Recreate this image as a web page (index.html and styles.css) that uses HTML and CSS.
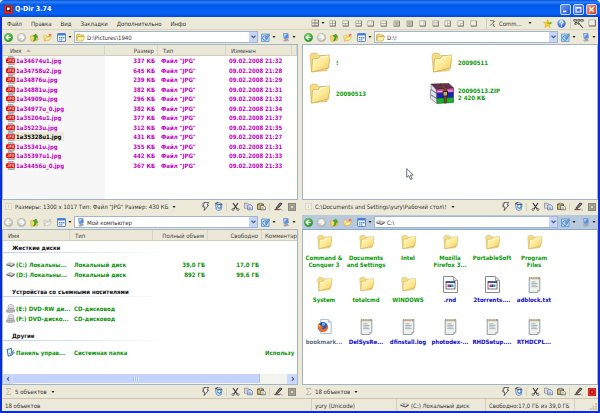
FILE: index.html
```html
<!DOCTYPE html>
<html lang="ru">
<head>
<meta charset="utf-8">
<title>Q-Dir 3.74</title>
<link rel="stylesheet" href="styles.css">
</head>
<body>
<svg class="sprite" aria-hidden="true">
  <defs>
    <linearGradient id="gFold" x1="0" y1="0" x2="1" y2="1"><stop offset="0" stop-color="#fffbd0"/><stop offset=".5" stop-color="#fdea98"/><stop offset="1" stop-color="#eec95e"/></linearGradient>
    <radialGradient id="gGreen" cx=".4" cy=".3" r=".8"><stop offset="0" stop-color="#7fdc6c"/><stop offset="1" stop-color="#128a18"/></radialGradient>
    <radialGradient id="gGrey" cx=".4" cy=".3" r=".8"><stop offset="0" stop-color="#f2f1ec"/><stop offset="1" stop-color="#b4b3ab"/></radialGradient>
    <radialGradient id="gBlue" cx=".4" cy=".3" r=".8"><stop offset="0" stop-color="#9cc4ff"/><stop offset="1" stop-color="#1c50c8"/></radialGradient>
  </defs>
  <symbol id="back" viewBox="0 0 18 18"><circle cx="9" cy="9" r="8.4" fill="url(#gGreen)" stroke="#2b8a2b" stroke-width=".8"/><path d="M14 9H5M9 4.5 4.500 9 9 13.500" fill="none" stroke="#fff" stroke-width="2.400"/></symbol>
  <symbol id="backoff" viewBox="0 0 18 18"><circle cx="9" cy="9" r="8.2" fill="url(#gGrey)" stroke="#a3a29a"/><path d="M14 9H5M9 4.500 4.500 9 9 13.500" fill="none" stroke="#fff" stroke-width="2.400"/></symbol>
  <symbol id="fwd" viewBox="0 0 18 18"><circle cx="9" cy="9" r="8.2" fill="url(#gGrey)" stroke="#a3a29a"/><path d="M4 9h9M9 4.500 13.500 9 9 13.500" fill="none" stroke="#fff" stroke-width="2.400"/></symbol>
  <symbol id="up" viewBox="0 0 18 18"><path d="M1 6 7 4l2 2 6-1 1 9-9 3-5-1z" fill="#f6d766" stroke="#c9a040"/><path d="M7 16c5-1 6-4 5-8l3 1-3-7-6 4 3 1c1 3 0 5-2 9z" fill="#37b22d" stroke="#1b7a1b" stroke-width=".8"/></symbol>
  <symbol id="newf" viewBox="0 0 18 18"><path d="M1 6 3 4l4 1 1 2 6-1v7L3 16z" fill="#fbe48a" stroke="#d6a545"/><path d="M3 16 6 9l11-2-4 7z" fill="#fff0a8" stroke="#d6a545"/><path d="m14 0 1 2.500 3-.5-2 2.200 1.500 2.500-3-1L12 7.500l.3-3L10 3l3-.5z" fill="#ff7040"/></symbol>
  <symbol id="newfoff" viewBox="0 0 18 18"><path d="M1 6 3 4l4 1 1 2 6-1v7L3 16z" fill="#e6e4da" stroke="#b5b4aa"/><path d="M3 16 6 9l11-2-4 7z" fill="#f4f3ee" stroke="#b5b4aa"/><path d="m14 1 1 2 2 .5-2 2-2 0-2-2z" fill="#c4c3ba"/></symbol>
  <symbol id="views" viewBox="0 0 18 18"><rect x="1" y="1" width="16" height="16" rx="1.500" fill="#fff" stroke="#3565b5" stroke-width="1.500"/><path d="M1 1h16v4H1z" fill="#3f7ce0"/><path d="M4 8h3v3H4zM8 8h3v3H8zM12 8h3v3h-3zM4 12.500h3v2.500H4zM8 12.500h3v2.500H8z" fill="#4a86dc"/></symbol>
  <symbol id="fold" viewBox="0 0 42 42"><path d="M2 9C2 5 4 2 8 2l8 1 3 4 17 1 2 3-2 26L5 40z" fill="#f3dc84" stroke="#d0b05c" stroke-width="1.200"/><path d="M5 40 7 14l12-1 3-5 18-2c2 0 2 1 2 3l-3 23z" fill="url(#gFold)" stroke="#c39c44" stroke-width="1.200"/><path d="M9 16l11-1 3-5 16-2" fill="none" stroke="#fffce4" stroke-width="1.500"/></symbol>
  <symbol id="sfold" viewBox="0 0 18 16"><path d="M1 13V3l2-2h4l2 2h6v3" fill="#f6d968" stroke="#a8842c"/><path d="M1 15 4 6h13l-3 9z" fill="#fff1a5" stroke="#a8842c"/></symbol>
  <symbol id="pc" viewBox="0 0 18 18"><path d="M5 1h9l1 9-9 1z" fill="#4b8df0" stroke="#8c98ae" stroke-width="1.500"/><path d="M6 2h6l-5 7z" fill="#a8d0ff"/><path d="M8 11h4l1 3H8zM5 14l9-1 2 2-9 2z" fill="#b6bdca" stroke="#747e90" stroke-width=".6"/></symbol>
  <symbol id="refresh" viewBox="0 0 18 18"><path d="M1 2h12l3 3v12H1z" fill="#bfe0fb" stroke="#3c7ac4" stroke-width="1.300"/><circle cx="8" cy="10" r="4.500" fill="#eef8ff" stroke="#2b6fc4" stroke-width="1.800"/><path d="m7 10 9-9 1 4-7 7z" fill="#72a6de" stroke="#30578c" stroke-width=".8"/></symbol>
  <symbol id="drop" viewBox="0 0 6 4"><path d="M0 0h6L3 4z" fill="#222"/></symbol>
  <symbol id="chev" viewBox="0 0 10 8"><path d="m1 1.500 4 4 4-4" fill="none" stroke="#4d6185" stroke-width="2.400"/></symbol>
  <symbol id="disk" viewBox="0 0 26 14"><path d="m1 6 9-5 15 4-9 6z" fill="#d4d4d4" stroke="#777"/><path d="M1 6v3l15 5v-3zM16 11v3l9-5V5z" fill="#555"/><circle cx="11" cy="5.500" r="2" fill="#888"/></symbol>
  <symbol id="cd" viewBox="0 0 24 24"><circle cx="13" cy="9" r="8" fill="#dfe1ee" stroke="#8d8fa0" stroke-width="1.300"/><circle cx="13" cy="9" r="2.500" fill="#fff" stroke="#999"/><path d="m1 17 5-5h13l4 4v5l-14 2-8-2z" fill="#c4c4c8" stroke="#666"/><path d="M3 18h17" stroke="#666"/></symbol>
  <symbol id="panel" viewBox="0 0 24 24"><path d="M3 4 14 1l3 17-11 4z" fill="#e5f3ff" stroke="#235ea8" stroke-width="2.500"/><path d="m9 14 3 3 9-11" fill="none" stroke="#3a72b8" stroke-width="2.500"/><path d="M17 10h6v5h-6z" fill="#6e93bf"/></symbol>
  <symbol id="jpg" viewBox="0 0 27 27"><path d="M7 1h13l5 5v20H7z" fill="#bdbdbd" stroke="#858585" stroke-width="1.500"/><path d="M20 1v5h5" fill="#eee" stroke="#777"/><rect x="0" y="7" width="27" height="14" rx="3" fill="#e8150f"/><path d="M8 10v6q-2 3-4 0M12 18v-8h3q2 2 0 4h-3M24 11q-5-2-5 3t4 3v-3h-2" fill="none" stroke="#fff" stroke-width="1.600"/></symbol>
  <symbol id="rar" viewBox="0 0 48 42"><path d="M2 2 38 1l9 9-35 3z" fill="#66304f" stroke="#221"/><path d="m12 13 35-3v9l-34 2z" fill="#d64fc0" stroke="#411"/><path d="m13 21 34-2v10l-34 2z" fill="#1428c8" stroke="#114"/><path d="m13 31 34-2v10l-33 2z" fill="#14b428" stroke="#141"/><path d="m2 2 10 11 1 8-11-9zM1 13l12 8v10L1 22zM1 24l12 7 1 10L1 31z" fill="#e4e4ee" stroke="#445"/><path d="m25 2 8 9v29h-5V12l-8-10z" fill="#7c4a2e" stroke="#321"/><rect x="26" y="17" width="9" height="9" fill="#c8aa72" stroke="#321" stroke-width="2"/><path d="M15 17h10M36 16h9" stroke="#f7b8ee" stroke-width="2"/></symbol>
  <symbol id="app16" viewBox="0 0 30 34"><path d="M1 1h20l8 8v24H1z" fill="#fff" stroke="#8a8a8a" stroke-width="2"/><path d="M21 1v8h8" fill="#ddd" stroke="#8a8a8a" stroke-width="1.500"/><rect x="6" y="11" width="18" height="15" fill="#fff" stroke="#444" stroke-width="1.500"/><path d="M6 11h18v3H6z" fill="#2d50b4"/><path d="M9 17h4v5H9z" fill="#e22"/><path d="M13 17h4v5h-4z" fill="#22c"/><path d="M17 17h4v5h-4z" fill="#2a8"/></symbol>
  <symbol id="txt" viewBox="0 0 24 32"><path d="M2 3h20v24l-4 4H2z" fill="#eef1ee" stroke="#8d9aa2" stroke-width="1.800"/><path d="M2 2h20v4H2z" fill="#b09a70"/><path d="M5 1v4M9 1v4M13 1v4M17 1v4" stroke="#fff" stroke-width="1.300"/><path d="M6 11h8M6 14h12M6 17h10M6 20h12" stroke="#9aa4ac" stroke-width="1.500"/><path d="M18 31v-4h4" fill="#ccc" stroke="#889"/></symbol>
  <symbol id="ffx" viewBox="0 0 36 36"><path d="M9 1h18l7 7v27H9z" fill="#fafcff" stroke="#7d93c0" stroke-width="1.500"/><path d="M27 1v7h7" fill="#cfdcf2" stroke="#7d93c0"/><circle cx="14" cy="19" r="12" fill="#2356b4"/><path d="M12 9q8-1 8 5-4 4-7 2" fill="#6fb2f0"/><path d="M3 11q-3 12 5 18 11 6 17-4 3-7-1-13 0 7-4 11-6 4-9-1l5-1-5-4q-6-1-8-6z" fill="#ee6a1a"/><path d="M3 12q4 1 7 6l-5 1z" fill="#ffb020"/></symbol>
  <symbol id="bolt" viewBox="0 0 18 20"><path d="M7 1h9l-4 6h4L6 19l2-8H3z" fill="#fff" stroke="#222" stroke-width="1.500"/><path d="M2 3 8 1M1 7h4" stroke="#222"/></symbol>
  <symbol id="recyc" viewBox="0 0 20 20"><path d="m3 3 9-2 6 4-2 12-7 2-4-3z" fill="#cfe2f6" stroke="#3e5c8c" stroke-width="1.300"/><circle cx="12" cy="10" r="5" fill="#3d84dc"/><path d="m8 10 3-4 4 3-3 4z" fill="#fff"/><path d="M3 3l6 3 9-1M4 3l5-2" fill="none" stroke="#333" stroke-width="1.600"/></symbol>
  <symbol id="cut" viewBox="0 0 18 18"><path d="M4 2 13 15M14 2 5 15" stroke="#333" stroke-width="2.200"/><circle cx="4" cy="15" r="2" fill="#fff" stroke="#333" stroke-width="1.300"/><circle cx="14" cy="15" r="2" fill="#fff" stroke="#333" stroke-width="1.300"/></symbol>
  <symbol id="copy" viewBox="0 0 22 18"><path d="M1 1h8l3 3v9H1z" fill="#fff" stroke="#333" stroke-width="1.200"/><path d="M9 5h8l4 4v8H9z" fill="#dce9ff" stroke="#24439a" stroke-width="1.300"/><path d="M3 5h5M3 8h5M11 11h7M11 14h7" stroke="#456"/></symbol>
  <symbol id="paste" viewBox="0 0 22 18"><path d="M1 3h15v13H1z" fill="#d6b963" stroke="#222" stroke-width="1.500"/><path d="M5 1h7v4H5z" fill="#eee" stroke="#222"/><path d="M9 7h8l4 4v6H9z" fill="#fff" stroke="#222" stroke-width="1.300"/><path d="M11 11h6M11 14h7" stroke="#555"/></symbol>
  <symbol id="edit" viewBox="0 0 20 20"><path d="M1 17h12" stroke="#222" stroke-width="1.800"/><path d="M4 14 13 2l5 2-9 10z" fill="#777" stroke="#222" stroke-width="1.500"/><path d="m4 14 5 0-5 3z" fill="#c33"/><path d="M13 16h3M17 18h2" stroke="#777" stroke-width="2"/></symbol>
  <symbol id="sq" viewBox="0 0 18 18"><path d="M0 0h18v18H0z" fill="#85827a"/><path d="M2 2h14v14H2z" fill="#b0ac9f"/><path d="M5 5h8v8H5z" fill="#dad6c8" stroke="#6a675e" stroke-width="1.500"/></symbol>
  <symbol id="sqred" viewBox="0 0 18 18"><path d="M0 0h18v18H0z" fill="#b81818"/><path d="M1 1h16v16H1z" fill="#f23030"/><path d="M5 5h8v8H5z" fill="#f44" stroke="#600" stroke-width="1.800"/></symbol>
  <symbol id="page" viewBox="0 0 18 18"><path d="M1 1h16v16H1z" fill="#f0eee2" stroke="#c9c6b6" stroke-width="1.500"/><path d="M9 5v8" stroke="#bbb8a8" stroke-width="1.500"/></symbol>
  <symbol id="sigma" viewBox="0 0 14 16"><path d="M12 4V1H2l6 7-6 7h10v-3" fill="none" stroke="#aaa799" stroke-width="1.600"/></symbol>
  <symbol id="frame" viewBox="0 0 18 18"><path d="M2 2h14v13H2z" fill="#f2f0e6" stroke="#a09d90" stroke-width="1.600"/><path d="M2 16h15V2" fill="none" stroke="#6b695f" stroke-width="2"/></symbol>
  <symbol id="logo" viewBox="0 0 26 26"><path d="M0 0h26v26H0z" fill="#b01414"/><path d="M2 2h22v22H2z" fill="#d83a30"/><path d="M7 6h11v11H7zM14 14l6 6" fill="#fff" stroke="#5c0808" stroke-width="3"/></symbol>
  <symbol id="tool" viewBox="0 0 18 20"><path d="M2 2h10v4l-4 4 6 4-4 2 6 3M12 6l4-3M1 16l6-4" fill="none" stroke="#44423c" stroke-width="1.800"/></symbol>
  <symbol id="star" viewBox="0 0 24 24"><path d="m12 1 3 8 8 0-6 5 2 9-7-5-7 5 2-9-6-5h8z" fill="#ffd21e" stroke="#c09a10"/><path d="M11 12h9v3l3-4-3-4v3h-9z" fill="#28a828"/></symbol>
  <symbol id="help" viewBox="0 0 24 24"><circle cx="12" cy="12" r="11" fill="url(#gBlue)"/><path d="M8 9q0-4 4-4t4 3.500q0 2-4 4.500v2M12 17v3" fill="none" stroke="#fff" stroke-width="3"/></symbol>
  <symbol id="lens" viewBox="0 0 28 28"><path d="M2 4h7v4H2zM12 4h6v4h-6zM20 4h6v4h-6z" fill="none" stroke="#333" stroke-width="1.800"/><path d="M5 12h6l4 5M14 11l3 5 8 9M3 15l6 1" fill="none" stroke="#222" stroke-width="2.400"/></symbol>
  <symbol id="cursor" viewBox="0 0 14 22"><path d="M1 1v16l4-3 3 7 3-1-3-7h5z" fill="#fff" stroke="#44506a" stroke-width="1.500"/></symbol>
</svg>

<div class="window">
  <header class="title">
    <svg class="logo"><use href="#logo"/></svg>
    <h1>Q-Dir 3.74</h1>
    <button class="wbtn" aria-label="Свернуть"><svg viewBox="0 0 22 22"><path d="M5 16h8" stroke="#fff" stroke-width="3.500"/></svg></button>
    <button class="wbtn" aria-label="Развернуть"><svg viewBox="0 0 22 22"><path d="M5 6h12v11H5zM5 7h12" fill="none" stroke="#fff" stroke-width="2.500"/></svg></button>
    <button class="wbtn close" aria-label="Закрыть"><svg viewBox="0 0 22 22"><path d="m5 5 12 12M17 5 5 17" stroke="#fff" stroke-width="3"/></svg></button>
  </header>

  <div class="menubar">
    <nav class="menu"><button>Файл</button><button>Правка</button><button>Вид</button><button>Закладки</button><button>Дополнительно</button><button>Инфо</button></nav>
    <div class="layouts">
      <button class="split" aria-label="Вид панелей"><svg viewBox="0 0 18 18"><use href="#frame"/><path d="M9 2v13M2 9h14" stroke="#57554d" stroke-width="1.500"/></svg><svg class="dn"><use href="#drop"/></svg></button>
      <div class="modes">
        <button aria-label="Панели 1"><svg viewBox="0 0 18 18"><use href="#frame"/><path d="M9 2v13M2 9h14" stroke="#57554d"/></svg></button>
        <button aria-label="Панели 2"><svg viewBox="0 0 18 18"><use href="#frame"/><path d="M9 9v6M2 9h14" stroke="#57554d"/></svg></button>
        <button aria-label="Панели 3"><svg viewBox="0 0 18 18"><use href="#frame"/><path d="M9 2v7M2 9h14" stroke="#57554d"/></svg></button>
        <button aria-label="Панели 4"><svg viewBox="0 0 18 18"><use href="#frame"/><path d="M11 2v13" stroke="#a09d90"/></svg></button>
        <button aria-label="Панели 5"><svg viewBox="0 0 18 18"><use href="#frame"/><path d="M2 9h14" stroke="#57554d"/></svg></button>
        <button aria-label="Панели 6"><svg viewBox="0 0 18 18"><use href="#frame"/><path d="M3 3h12v11H3z" fill="#b5b2a6"/></svg></button>
        <button aria-label="Панели 7"><svg viewBox="0 0 18 18"><use href="#frame"/><path d="M3 3h12v11H3z" fill="#b5b2a6"/></svg></button>
        <button aria-label="Панели 8"><svg viewBox="0 0 18 18"><use href="#frame"/><path d="M12 2v13" stroke="#a09d90"/></svg></button>
        <button aria-label="Панели 9"><svg viewBox="0 0 18 18"><use href="#frame"/><path d="M2 6h14M2 10h14" stroke="#8a877b"/></svg></button>
        <button aria-label="Панели 10"><svg viewBox="0 0 18 18"><use href="#frame"/><path d="M9 2v13M9 9h7" stroke="#8a877b"/></svg></button>
        <button aria-label="Панели 11"><svg viewBox="0 0 18 18"><use href="#frame"/><path d="M9 9v6M9 9h7" stroke="#8a877b"/></svg></button>
        <button aria-label="Панели 12"><svg viewBox="0 0 18 18"><use href="#frame"/></svg></button>
      </div>
      <button class="comm"><svg><use href="#tool"/></svg><span>Comm...</span><svg class="dn"><use href="#drop"/></svg></button>
      <button class="big star" aria-label="Избранное"><svg><use href="#star"/></svg></button>
      <button class="big" aria-label="Справка"><svg><use href="#help"/></svg></button>
      <button class="big lens" aria-label="Лупа"><svg><use href="#lens"/></svg></button>
      <button class="big last" aria-label="Окно"><svg><use href="#frame"/></svg></button>
    </div>
  </div>

  <main class="panes">
    <section class="pane">
      <div class="toolbar">
        <button aria-label="Назад"><svg><use href="#back"/></svg></button><button aria-label="Вперёд"><svg><use href="#fwd"/></svg></button><button aria-label="Вверх"><svg><use href="#up"/></svg></button><button aria-label="Новая папка"><svg><use href="#newf"/></svg></button>
        <button class="wide" aria-label="Вид"><svg><use href="#views"/></svg><svg class="dn"><use href="#drop"/></svg></button>
        <div class="address"><svg><use href="#sfold"/></svg><select aria-label="Адрес"><option>D:\Pictures\1940</option></select><span class="arrow"><svg><use href="#chev"/></svg></span></div>
        <button class="wide" aria-label="Обновить"><svg><use href="#refresh"/></svg><svg class="dn"><use href="#drop"/></svg></button>
        <button class="wide" aria-label="Компьютер"><svg><use href="#pc"/></svg><svg class="dn"><use href="#drop"/></svg></button>
      </div>
      <div class="content sorted">
        <table class="files">
          <colgroup><col class="f1"><col class="f2"><col class="f3"><col class="f4"><col></colgroup>
          <thead><tr><th>Имя <svg class="asc" viewBox="0 0 8 5"><path d="M0 5h8L4 0z" fill="#b5b2a2"/></svg></th><th class="num">Размер</th><th>Тип</th><th>Изменен</th><th></th></tr></thead>
          <tbody>
            <tr><td><svg><use href="#jpg"/></svg><span>1a34674u1.jpg</span></td><td class="num">337 КБ</td><td>Файл "JPG"</td><td colspan="2">09.02.2008 21:32</td></tr>
            <tr><td><svg><use href="#jpg"/></svg><span>1a34758u2.jpg</span></td><td class="num">645 КБ</td><td>Файл "JPG"</td><td colspan="2">09.02.2008 21:28</td></tr>
            <tr><td><svg><use href="#jpg"/></svg><span>1a34876u.jpg</span></td><td class="num">239 КБ</td><td>Файл "JPG"</td><td colspan="2">09.02.2008 21:29</td></tr>
            <tr><td><svg><use href="#jpg"/></svg><span>1a34881u.jpg</span></td><td class="num">382 КБ</td><td>Файл "JPG"</td><td colspan="2">09.02.2008 21:31</td></tr>
            <tr><td><svg><use href="#jpg"/></svg><span>1a34909u.jpg</span></td><td class="num">296 КБ</td><td>Файл "JPG"</td><td colspan="2">09.02.2008 21:32</td></tr>
            <tr><td><svg><use href="#jpg"/></svg><span>1a34977u_0.jpg</span></td><td class="num">382 КБ</td><td>Файл "JPG"</td><td colspan="2">09.02.2008 21:34</td></tr>
            <tr><td><svg><use href="#jpg"/></svg><span>1a35204u1.jpg</span></td><td class="num">377 КБ</td><td>Файл "JPG"</td><td colspan="2">09.02.2008 21:37</td></tr>
            <tr><td><svg><use href="#jpg"/></svg><span>1a35223u.jpg</span></td><td class="num">312 КБ</td><td>Файл "JPG"</td><td colspan="2">09.02.2008 21:35</td></tr>
            <tr><td><svg><use href="#jpg"/></svg><span class="picked">1a35328u1.jpg</span></td><td class="num">431 КБ</td><td>Файл "JPG"</td><td colspan="2">09.02.2008 21:27</td></tr>
            <tr><td><svg><use href="#jpg"/></svg><span>1a35341u.jpg</span></td><td class="num">355 КБ</td><td>Файл "JPG"</td><td colspan="2">09.02.2008 21:31</td></tr>
            <tr><td><svg><use href="#jpg"/></svg><span>1a35397u1.jpg</span></td><td class="num">442 КБ</td><td>Файл "JPG"</td><td colspan="2">09.02.2008 21:33</td></tr>
            <tr><td><svg><use href="#jpg"/></svg><span>1a34456u_0.jpg</span></td><td class="num">367 КБ</td><td>Файл "JPG"</td><td colspan="2">09.02.2008 21:33</td></tr>
          </tbody>
        </table>
      </div>
      <footer class="status">
        <svg class="mark"><use href="#page"/></svg><button class="info">Размеры: 1300 x 1017 Тип: Файл "JPG" Размер: 430 КБ <svg class="dn"><use href="#drop"/></svg></button>
        <button aria-label="Быстро"><svg><use href="#bolt"/></svg></button><button aria-label="Удалить"><svg><use href="#recyc"/></svg></button><i></i><button aria-label="Вырезать"><svg><use href="#cut"/></svg></button><button aria-label="Копировать"><svg><use href="#copy"/></svg></button><button aria-label="Вставить"><svg><use href="#paste"/></svg></button><i></i><button aria-label="Переименовать"><svg><use href="#edit"/></svg></button><button aria-label="Выбор панели"><svg class="sq"><use href="#sq"/></svg></button>
      </footer>
    </section>

    <section class="pane">
      <div class="toolbar">
        <button aria-label="Назад"><svg><use href="#back"/></svg></button><button aria-label="Вперёд"><svg><use href="#fwd"/></svg></button><button aria-label="Вверх"><svg><use href="#up"/></svg></button><button aria-label="Новая папка"><svg><use href="#newf"/></svg></button>
        <button class="wide" aria-label="Вид"><svg><use href="#views"/></svg><svg class="dn"><use href="#drop"/></svg></button>
        <div class="address"><svg><use href="#sfold"/></svg><select aria-label="Адрес"><option>D:\!</option></select><span class="arrow"><svg><use href="#chev"/></svg></span></div>
        <button class="wide" aria-label="Обновить"><svg><use href="#refresh"/></svg><svg class="dn"><use href="#drop"/></svg></button>
        <button class="wide" aria-label="Компьютер"><svg><use href="#pc"/></svg><svg class="dn"><use href="#drop"/></svg></button>
      </div>
      <div class="content">
        <ul class="tiles">
          <li><svg><use href="#fold"/></svg><span>!</span></li>
          <li><svg><use href="#fold"/></svg><span>20090511</span></li>
          <li><svg><use href="#fold"/></svg><span>20090513</span></li>
          <li><svg class="rar"><use href="#rar"/></svg><span>20090513.ZIP<br>2 420 КБ</span></li>
        </ul>
        <svg class="cursor"><use href="#cursor"/></svg>
      </div>
      <footer class="status">
        <svg class="mark"><use href="#page"/></svg><button class="info">C:\Documents and Settings\yury\Рабочий стол\! <svg class="dn"><use href="#drop"/></svg></button>
        <button aria-label="Быстро"><svg><use href="#bolt"/></svg></button><button aria-label="Удалить"><svg><use href="#recyc"/></svg></button><i></i><button aria-label="Вырезать"><svg><use href="#cut"/></svg></button><button aria-label="Копировать"><svg><use href="#copy"/></svg></button><button aria-label="Вставить"><svg><use href="#paste"/></svg></button><i></i><button aria-label="Переименовать"><svg><use href="#edit"/></svg></button><button aria-label="Выбор панели"><svg class="sq"><use href="#sq"/></svg></button>
      </footer>
    </section>

    <section class="pane">
      <div class="toolbar">
        <button aria-label="Назад"><svg><use href="#backoff"/></svg></button><button aria-label="Вперёд"><svg><use href="#fwd"/></svg></button><button aria-label="Вверх"><svg><use href="#up"/></svg></button><button aria-label="Новая папка"><svg><use href="#newfoff"/></svg></button>
        <button class="wide" aria-label="Вид"><svg><use href="#views"/></svg><svg class="dn"><use href="#drop"/></svg></button>
        <div class="address"><svg><use href="#pc"/></svg><select aria-label="Адрес"><option>Мой компьютер</option></select><span class="arrow"><svg><use href="#chev"/></svg></span></div>
        <button class="wide" aria-label="Обновить"><svg><use href="#refresh"/></svg><svg class="dn"><use href="#drop"/></svg></button>
        <button class="wide" aria-label="Компьютер"><svg><use href="#pc"/></svg><svg class="dn"><use href="#drop"/></svg></button>
      </div>
      <div class="content computer">
        <div class="drivebox">
        <table class="drives">
          <colgroup><col class="d1"><col class="d2"><col class="d3"><col class="d4"><col></colgroup>
          <thead><tr><th>Имя</th><th>Тип</th><th class="num">Полный объем</th><th class="num">Свободно</th><th class="note">Комментар</th></tr></thead>
          <tbody>
            <tr class="group first"><th colspan="5">Жесткие диски</th></tr>
            <tr><td><svg><use href="#disk"/></svg>(C:) Локальны...</td><td>Локальный диск</td><td class="num">39,0 ГБ</td><td class="num">17,0 ГБ</td><td></td></tr>
            <tr><td><svg><use href="#disk"/></svg>(D:) Локальны...</td><td>Локальный диск</td><td class="num">892 ГБ</td><td class="num">99,6 ГБ</td><td></td></tr>
            <tr class="group"><th colspan="5">Устройства со съемными носителями</th></tr>
            <tr><td><svg><use href="#cd"/></svg>(E:) DVD-RW ди...</td><td>CD-дисковод</td><td></td><td></td><td></td></tr>
            <tr><td><svg><use href="#cd"/></svg>(F:) DVD-диско...</td><td>CD-дисковод</td><td></td><td></td><td></td></tr>
            <tr class="group"><th colspan="5">Другие</th></tr>
            <tr><td><svg><use href="#panel"/></svg>Панель управ...</td><td>Системная папка</td><td></td><td></td><td class="note">Использу</td></tr>
          </tbody>
        </table>
        </div>
        <div class="scroll">
          <button aria-label="Влево"><svg viewBox="0 0 8 8"><path d="M5 1 2 4l3 3" fill="none" stroke="#4d6185" stroke-width="1.800"/></svg></button>
          <div class="track"><div class="thumb"></div></div>
          <button aria-label="Вправо"><svg viewBox="0 0 8 8"><path d="m3 1 3 3-3 3" fill="none" stroke="#4d6185" stroke-width="1.800"/></svg></button>
        </div>
      </div>
      <footer class="status">
        <svg class="mark"><use href="#sigma"/></svg><button class="info">5 объектов <svg class="dn"><use href="#drop"/></svg></button>
        <button aria-label="Быстро"><svg><use href="#bolt"/></svg></button><button aria-label="Удалить"><svg><use href="#recyc"/></svg></button><i></i><button aria-label="Вырезать"><svg><use href="#cut"/></svg></button><button aria-label="Копировать"><svg><use href="#copy"/></svg></button><button aria-label="Вставить"><svg><use href="#paste"/></svg></button><i></i><button aria-label="Переименовать"><svg><use href="#edit"/></svg></button><button aria-label="Выбор панели"><svg class="sq"><use href="#sq"/></svg></button>
      </footer>
    </section>

    <section class="pane active">
      <div class="toolbar">
        <button aria-label="Назад"><svg><use href="#back"/></svg></button><button aria-label="Вперёд"><svg><use href="#fwd"/></svg></button><button aria-label="Вверх"><svg><use href="#up"/></svg></button><button aria-label="Новая папка"><svg><use href="#newf"/></svg></button>
        <button class="wide" aria-label="Вид"><svg><use href="#views"/></svg><svg class="dn"><use href="#drop"/></svg></button>
        <div class="address"><svg><use href="#disk"/></svg><select aria-label="Адрес"><option>C:\</option></select><span class="arrow"><svg><use href="#chev"/></svg></span></div>
        <button class="wide" aria-label="Обновить"><svg><use href="#refresh"/></svg><svg class="dn"><use href="#drop"/></svg></button>
        <button class="wide" aria-label="Компьютер"><svg><use href="#pc"/></svg><svg class="dn"><use href="#drop"/></svg></button>
      </div>
      <div class="content">
        <ul class="icons">
          <li><svg><use href="#fold"/></svg>Command &amp; Conquer 3</li>
          <li><svg><use href="#fold"/></svg>Documents and Settings</li>
          <li><svg><use href="#fold"/></svg>Intel</li>
          <li><svg><use href="#fold"/></svg>Mozilla Firefox 3...</li>
          <li><svg><use href="#fold"/></svg>PortableSoft</li>
          <li><svg><use href="#fold"/></svg>Program<br>Files</li>
          <li><svg><use href="#fold"/></svg>System</li>
          <li><svg><use href="#fold"/></svg>totalcmd</li>
          <li><svg><use href="#fold"/></svg>WINDOWS</li>
          <li class="file"><svg><use href="#app16"/></svg>.rnd</li>
          <li class="file"><svg><use href="#app16"/></svg>2torrents....</li>
          <li class="file"><svg><use href="#txt"/></svg>adblock.txt</li>
          <li class="file dim"><svg><use href="#ffx"/></svg>bookmark...</li>
          <li class="file"><svg><use href="#txt"/></svg>DelSysRe...</li>
          <li class="file"><svg><use href="#txt"/></svg>dfinstall.log</li>
          <li class="file"><svg><use href="#txt"/></svg>photodex-...</li>
          <li class="file"><svg><use href="#txt"/></svg>RHDSetup....</li>
          <li class="file"><svg><use href="#txt"/></svg>RTHDCPL...</li>
        </ul>
      </div>
      <footer class="status">
        <svg class="mark"><use href="#sigma"/></svg><button class="info">18 объектов <svg class="dn"><use href="#drop"/></svg></button>
        <button aria-label="Быстро"><svg><use href="#bolt"/></svg></button><button aria-label="Удалить"><svg><use href="#recyc"/></svg></button><i></i><button aria-label="Вырезать"><svg><use href="#cut"/></svg></button><button aria-label="Копировать"><svg><use href="#copy"/></svg></button><button aria-label="Вставить"><svg><use href="#paste"/></svg></button><i></i><button aria-label="Переименовать"><svg><use href="#edit"/></svg></button><button aria-label="Выбор панели"><svg class="sq"><use href="#sqred"/></svg></button>
      </footer>
    </section>
  </main>

  <footer class="mainstatus">
    <span>18 объектов</span>
    <span>yury (Unicode)</span>
    <span><svg><use href="#disk"/></svg>(C:) Локальный диск</span>
    <span>Свободно:17,0 ГБ из 39,0 ГБ</span>
    <span class="grip"><svg viewBox="0 0 8 8"><path d="M6 0h2v2H6zM3 3h2v2H3zM6 3h2v2H6zM0 6h2v2H0zM3 6h2v2H3zM6 6h2v2H6z" fill="#bdb9a6"/></svg></span>
  </footer>
</div>
</body>
</html>
```
FILE: styles.css
```css
* { box-sizing: border-box; }

body {
  margin: 0;
  background: #dfe8f6;
  color: #333;
  font: 6px/9px "DejaVu Sans Condensed", "Noto Sans", sans-serif;
}

button, select {
  margin: 0;
  padding: 0;
  border: 0;
  background: none;
  color: inherit;
  font: inherit;
}

svg { display: block; flex: none; }
.sprite { position: absolute; width: 0; height: 0; }
svg.dn { width: 4px; height: 2px; }

.window {
  display: flex;
  flex-direction: column;
  min-height: 100vh;
  padding: 0 2px 2px;
  background: #0a2fd0;
  border-radius: 5px 5px 0 0;
  overflow: hidden;
}

/* Title bar */
.title {
  display: flex;
  align-items: center;
  gap: 2px;
  height: 17px;
  margin: 0 -2px;
  padding: 1px 3px 0 4px;
  background: linear-gradient(#0a4fd8, #2a83fb 2px, #0358e6 5px, #0462f8 13px, #0348cc);
}
.logo { width: 9px; height: 9px; }
.title h1 {
  flex: 1;
  margin: 0;
  color: #fff;
  font-size: 7px;
  font-weight: bold;
}
.wbtn {
  width: 11px;
  height: 11px;
  border: 1px solid #c4d6fb;
  border-radius: 2px;
  background: linear-gradient(135deg, #6d9bf8, #1f4fd8);
}
.wbtn svg { width: 9px; height: 9px; }
.wbtn.close { background: linear-gradient(135deg, #f09a7c, #d03c10); }

/* Menu */
.menubar {
  display: grid;
  grid-template-columns: 1fr 1fr;
  height: 13px;
  background: #ece9d8;
  border-bottom: 1px solid #d9d5c3;
}
.menu { display: flex; gap: 9px; padding-left: 5px; }
.layouts { display: flex; align-items: center; padding-left: 10px; }
.layouts svg { width: 7px; height: 7px; }
.layouts svg.dn { width: 4px; height: 2px; }
.layouts button { display: flex; align-items: center; justify-content: center; }
.layouts .split { width: 16px; gap: 2px; }
.layouts .split svg:first-child { width: 8px; height: 8px; }
.modes {
  flex: 1;
  display: grid;
  grid-template-columns: repeat(12, 1fr);
}
.layouts .comm {
  width: 46px;
  height: 11px;
  gap: 3px;
  padding-left: 2px;
  margin-left: 6px;
  justify-content: flex-start;
  border-left: 1px solid #d3cfbd;
}
.comm span { flex: 1; text-align: left; }
.big { width: 14px; height: 12px; }
.big svg { width: 9px; height: 9px; }
.big.star { margin-left: 8px; }
.big.lens { width: 16px; margin-left: 2px; border-left: 1px solid #d3cfbd; }
.big.lens svg { width: 11px; height: 11px; }
.big.last { width: 12px; }
.big.last svg { width: 8px; height: 8px; }

/* Panes */
.panes {
  flex: 1;
  display: grid;
  grid-template-columns: minmax(0, 1fr) minmax(0, 1fr);
  grid-auto-rows: 1fr;
  gap: 2px 4px;
  background: #ece9d8;
}
.pane { display: flex; flex-direction: column; min-width: 0; }

.toolbar {
  display: flex;
  align-items: center;
  height: 14px;
  background: #ece9d8;
}
.active .toolbar { background: #b7c9da; }
.toolbar button {
  display: flex;
  align-items: center;
  justify-content: center;
  width: 13px;
  height: 12px;
}
.toolbar svg { width: 9px; height: 9px; }
.toolbar svg.dn { width: 4px; height: 2px; }
.toolbar .wide { width: 20px; gap: 2px; }

.address {
  flex: 1;
  display: flex;
  align-items: center;
  gap: 2px;
  min-width: 0;
  height: 12px;
  padding-left: 1px;
  background: #fff;
  border: 1px solid #a3b6c9;
}
.address select {
  flex: 1;
  min-width: 0;
  height: 10px;
  appearance: none;
  outline: 0;
}
.address .arrow {
  display: flex;
  align-items: center;
  justify-content: center;
  width: 8px;
  height: 10px;
  background: #c5d5fb;
  pointer-events: none;
}
.address .arrow svg { width: 5px; height: 4px; }

.content {
  flex: 1;
  position: relative;
  background: #fff;
  border: 1px solid #9fb4c8;
  overflow: hidden;
}
.active .content { border-top-color: #86a9d2; }
.sorted { background: linear-gradient(to right, #f7f7f7 102px, #fff 102px); }

/* Tables */
table {
  border-collapse: separate;
  border-spacing: 0;
  table-layout: fixed;
}
td, th { padding: 0; white-space: nowrap; text-align: left; vertical-align: middle; }
td { font-weight: bold; }
td svg { float: left; width: 9px; height: 9px; }
thead th {
  height: 11px;
  font-weight: normal;
  background: #ebe8d8;
  border-bottom: 1px solid #d3cfbd;
  border-right: 1px solid #d9d5c4;
}
td.num, thead th.num { text-align: right; padding-right: 3px; }

.files { width: 100%; height: 125px; color: #c000c0; line-height: 9px; }
.files thead, .drives thead { color: #444; }
.f1 { width: 102px; }
.f2 { width: 53px; }
.f3 { width: 68px; }
.f4 { width: 66px; }
.files thead th { padding-left: 5px; }
.files thead th:first-child { padding-left: 7px; }
.files td { padding-left: 3px; }
.files td span { display: inline-block; padding: 0 3px 0 1px; }
.files .picked { background: #ece9d8; color: #000; }
.asc { display: inline-block; width: 5px; height: 3px; margin-left: 3px; vertical-align: middle; }

.computer { display: flex; flex-direction: column; }
.drivebox { flex: 1; overflow: hidden; }
.drives { width: 100%; color: #079207; }
.d1 { width: 67px; }
.d2 { width: 83px; }
.d3 { width: 55px; }
.d4 { width: 54px; }
.drives thead th { padding-left: 5px; }
.drives td { height: 10px; padding-left: 4px; }
.drives td:first-child { padding-left: 3px; }
.drives thead .note, .drives td.note { padding-left: 3px; border-right: 0; }
.drives td svg { margin-right: 1px; }
.drives .group th {
  height: 24px;
  padding: 0 0 7px 9px;
  vertical-align: bottom;
  color: #111;
  background: linear-gradient(to right, #b9d2f8, #fff) 0 calc(100% - 6px) / 165px 1px no-repeat;
}
.drives .first th { height: 18px; }

.scroll { display: flex; height: 10px; background: #f4f4ee; }
.scroll button {
  display: flex;
  align-items: center;
  justify-content: center;
  width: 10px;
  background: #c9d8fb;
  border-radius: 1px;
}
.scroll button svg { width: 5px; height: 6px; }
.track { flex: 1; }
.thumb {
  width: 90%;
  height: 9px;
  background: repeating-linear-gradient(to right, #b0c4f4 0 1px, #dce6fe 1px 2px) center / 6px 4px no-repeat, #c3d3fd;
  border-right: 1px solid #a8bdf0;
}

/* Large tiles */
.tiles, .icons { margin: 0; padding: 0; list-style: none; font-weight: bold; color: #079a07; }
.tiles {
  display: grid;
  grid-template-columns: repeat(auto-fill, 122px);
  grid-auto-rows: 31px;
  padding: 2px 0 0 5px;
}
.tiles li { display: flex; align-items: center; line-height: 7px; }
.tiles svg { width: 21px; height: 21px; margin: 0 6px 0 1px; }
.tiles svg.rar { width: 24px; height: 21px; margin: 0 4px 0 0; }
.cursor { position: absolute; left: 35%; top: 80%; width: 8px; height: 12px; }

.icons {
  display: grid;
  grid-template-columns: repeat(6, 42px);
  grid-auto-rows: 42px;
}
.icons li { padding-top: 4px; line-height: 7px; text-align: center; }
.icons svg { width: 15px; height: 16px; margin: 0 auto 4px; }
.icons .file { color: #0a0ac8; }
.icons .file svg { height: 17px; margin-bottom: 3px; }
.icons .dim { color: #5a6f86; }

/* Pane status */
.status { display: flex; align-items: center; height: 13px; }
.status .mark { width: 7px; height: 7px; margin: 0 3px; }
.status .info {
  flex: 1;
  display: flex;
  align-items: center;
  gap: 4px;
  width: auto;
  min-width: 0;
  justify-content: flex-start;
  white-space: nowrap;
}
.status button { display: flex; justify-content: center; align-items: center; width: 13px; height: 12px; }
.status svg { width: 9px; height: 9px; }
.status svg.sq { width: 8px; height: 8px; }
.status svg.dn { width: 4px; height: 2px; }
.status i { width: 1px; height: 8px; margin: 0 2px 0 1px; background: #d6d2c0; }

.mainstatus {
  display: grid;
  grid-template-columns: 1fr 85px 89px 89px 24px;
  height: 13px;
  background: #ece9d8;
  border-top: 1px solid #c9c5b2;
}
.mainstatus span { display: flex; align-items: center; gap: 2px; padding-left: 3px; }
.mainstatus span + span { border-left: 1px solid #d3cfbd; }
.mainstatus svg { width: 9px; height: 8px; }
.mainstatus .grip { align-items: flex-end; justify-content: flex-end; padding: 0 1px 1px 0; }
.grip svg { width: 7px; height: 7px; }
```
